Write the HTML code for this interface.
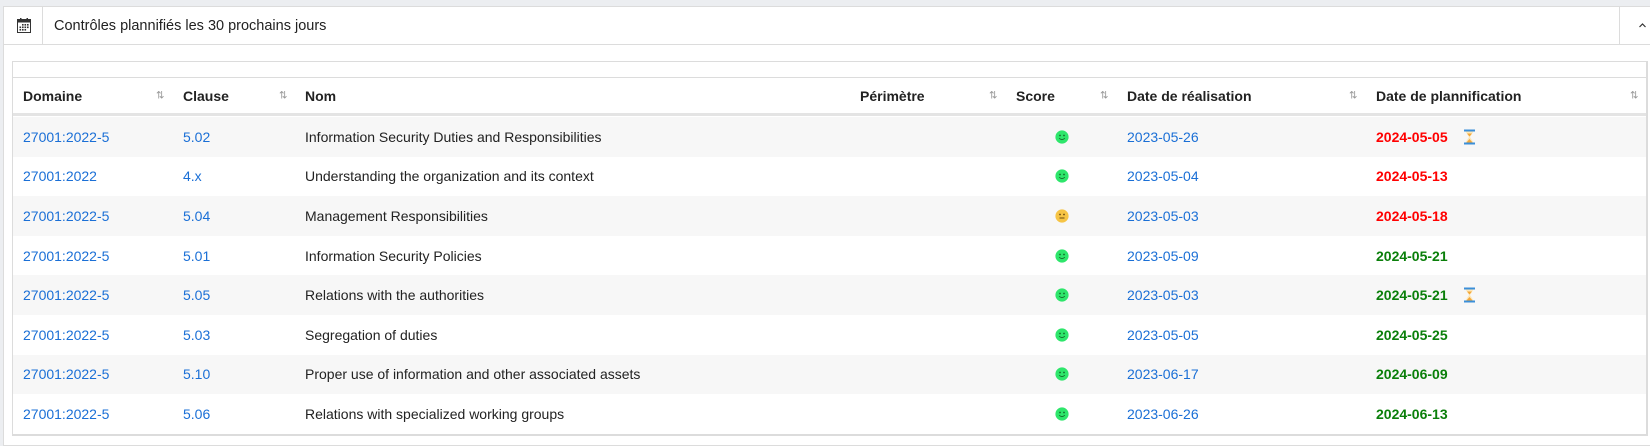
<!DOCTYPE html>
<html><head><meta charset="utf-8"><style>
*{box-sizing:border-box;margin:0;padding:0}
body{width:1650px;height:443px;background:#eceef1;font-family:"Liberation Sans",sans-serif;font-size:14px;color:#222;position:relative;overflow:hidden}
.card{position:absolute;left:3px;top:6px;width:1650px;height:440px;background:#fff;border:1px solid #dcdcdc}
.hdr{position:absolute;left:0;top:0;right:0;height:38px;border-bottom:1px solid #dcdcdc}
.ico{position:absolute;left:0;top:0;width:39px;height:37px;border-right:1px solid #dcdcdc}
.title{position:absolute;left:50px;top:11px;font-size:14.5px;color:#222}
.car{position:absolute;left:1615px;top:0;width:40px;height:37px;border-left:1px solid #dcdcdc}
.tbl{position:absolute;left:12px;top:61px;width:1636px;height:375px;border:1px solid #dcdcdc;border-bottom:2px solid #dcdcdc;border-right:2px solid #dcdcdc}
.th{position:absolute;left:0;top:15px;right:0;height:39px;border-top:1px solid #dcdcdc;border-bottom:3px solid #e4e4e4;font-weight:bold}
.row{position:absolute;left:0;right:0;height:39.6px}
.c{position:absolute;top:50%;transform:translateY(-50%);white-space:nowrap}
.a{color:#1a6fd6}
.s{color:#999;font-size:10px;font-weight:normal}
.r{color:#f00;font-weight:bold}
.g{color:#0a7f0a;font-weight:bold}
</style></head><body>
<svg width="0" height="0" style="position:absolute"><defs>
<symbol id="smg" viewBox="0 0 14 14"><circle cx="7" cy="7" r="6.6" fill="#2ee66b"/><circle cx="5" cy="5.5" r="0.9" fill="#146b2a"/><circle cx="9" cy="5.5" r="0.9" fill="#146b2a"/><path d="M4.2 8.2 Q7 11 9.8 8.2" fill="none" stroke="#146b2a" stroke-width="1"/></symbol>
<symbol id="smy" viewBox="0 0 14 14"><circle cx="7" cy="7" r="6.6" fill="#f6c445"/><circle cx="5" cy="5.5" r="0.9" fill="#6b4a10"/><circle cx="9" cy="5.5" r="0.9" fill="#6b4a10"/><path d="M4.5 9 H9.5" stroke="#6b4a10" stroke-width="1"/></symbol>
<symbol id="hg" viewBox="0 0 11 15"><rect x="0" y="0" width="11" height="2" fill="#3b8fd9"/><rect x="0" y="13" width="11" height="2" fill="#3b8fd9"/><path d="M1.5 2 H9.5 L6 7.5 L9.5 13 H1.5 L5 7.5 Z" fill="#fde7b8"/><path d="M3 4 H8 L5.5 7 Z M2.5 13 L5.5 9.5 L8.5 13 Z" fill="#f3a73a"/></symbol>
</defs></svg>
<div class="card">
<div class="hdr">
<div class="ico"><svg style="position:absolute;left:13px;top:11px" width="14" height="15" viewBox="0 0 14 15"><rect x="0.5" y="1.5" width="13" height="13" fill="#fff" stroke="#333"/><rect x="0" y="1" width="14" height="3.5" fill="#333"/><rect x="3" y="0" width="1.5" height="2" fill="#333"/><rect x="9.5" y="0" width="1.5" height="2" fill="#333"/><g fill="#333"><rect x="5" y="6" width="1.6" height="1.6"/><rect x="7.5" y="6" width="1.6" height="1.6"/><rect x="10" y="6" width="1.6" height="1.6"/><rect x="2.5" y="8.5" width="1.6" height="1.6"/><rect x="5" y="8.5" width="1.6" height="1.6"/><rect x="7.5" y="8.5" width="1.6" height="1.6"/><rect x="10" y="8.5" width="1.6" height="1.6"/><rect x="2.5" y="11" width="1.6" height="1.6"/><rect x="5" y="11" width="1.6" height="1.6"/><rect x="7.5" y="11" width="1.6" height="1.6"/></g></svg></div>
<div class="title">Contrôles plannifiés les 30 prochains jours</div>
<div class="car"><svg style="position:absolute;left:19px;top:16px" width="7" height="5" viewBox="0 0 7 5"><path d="M0.5 4 L3.5 1 L6.5 4" fill="none" stroke="#333" stroke-width="1.2"/></svg></div>
</div>
</div>
<div class="tbl">
<div class="th">
<span class="c" style="left:10px">Domaine</span><span class="c s" style="left:143px">⇅</span>
<span class="c" style="left:170px">Clause</span><span class="c s" style="left:266px">⇅</span>
<span class="c" style="left:292px">Nom</span>
<span class="c" style="left:847px">Périmètre</span><span class="c s" style="left:976px">⇅</span>
<span class="c" style="left:1003px">Score</span><span class="c s" style="left:1087px">⇅</span>
<span class="c" style="left:1114px">Date de réalisation</span><span class="c s" style="left:1336px">⇅</span>
<span class="c" style="left:1363px">Date de plannification</span><span class="c s" style="left:1617px">⇅</span>
</div>
<div style="position:absolute;left:0;right:0;top:55px">
<div class="row" style="top:0;background:#f7f7f7"><span class="c a" style="left:10px">27001:2022-5</span><span class="c a" style="left:170px">5.02</span><span class="c" style="left:292px">Information Security Duties and Responsibilities</span><svg class="c" style="left:1042px" width="14" height="14"><use href="#smg"/></svg><span class="c a" style="left:1114px">2023-05-26</span><span class="c r" style="left:1363px">2024-05-05</span><svg class="c" style="left:1451px" width="11" height="15"><use href="#hg"/></svg></div>
<div class="row" style="top:39.6px;background:#fff"><span class="c a" style="left:10px">27001:2022</span><span class="c a" style="left:170px">4.x</span><span class="c" style="left:292px">Understanding the organization and its context</span><svg class="c" style="left:1042px" width="14" height="14"><use href="#smg"/></svg><span class="c a" style="left:1114px">2023-05-04</span><span class="c r" style="left:1363px">2024-05-13</span></div>
<div class="row" style="top:79.2px;background:#f7f7f7"><span class="c a" style="left:10px">27001:2022-5</span><span class="c a" style="left:170px">5.04</span><span class="c" style="left:292px">Management Responsibilities</span><svg class="c" style="left:1042px" width="14" height="14"><use href="#smy"/></svg><span class="c a" style="left:1114px">2023-05-03</span><span class="c r" style="left:1363px">2024-05-18</span></div>
<div class="row" style="top:118.8px;background:#fff"><span class="c a" style="left:10px">27001:2022-5</span><span class="c a" style="left:170px">5.01</span><span class="c" style="left:292px">Information Security Policies</span><svg class="c" style="left:1042px" width="14" height="14"><use href="#smg"/></svg><span class="c a" style="left:1114px">2023-05-09</span><span class="c g" style="left:1363px">2024-05-21</span></div>
<div class="row" style="top:158.4px;background:#f7f7f7"><span class="c a" style="left:10px">27001:2022-5</span><span class="c a" style="left:170px">5.05</span><span class="c" style="left:292px">Relations with the authorities</span><svg class="c" style="left:1042px" width="14" height="14"><use href="#smg"/></svg><span class="c a" style="left:1114px">2023-05-03</span><span class="c g" style="left:1363px">2024-05-21</span><svg class="c" style="left:1451px" width="11" height="15"><use href="#hg"/></svg></div>
<div class="row" style="top:198px;background:#fff"><span class="c a" style="left:10px">27001:2022-5</span><span class="c a" style="left:170px">5.03</span><span class="c" style="left:292px">Segregation of duties</span><svg class="c" style="left:1042px" width="14" height="14"><use href="#smg"/></svg><span class="c a" style="left:1114px">2023-05-05</span><span class="c g" style="left:1363px">2024-05-25</span></div>
<div class="row" style="top:237.6px;background:#f7f7f7"><span class="c a" style="left:10px">27001:2022-5</span><span class="c a" style="left:170px">5.10</span><span class="c" style="left:292px">Proper use of information and other associated assets</span><svg class="c" style="left:1042px" width="14" height="14"><use href="#smg"/></svg><span class="c a" style="left:1114px">2023-06-17</span><span class="c g" style="left:1363px">2024-06-09</span></div>
<div class="row" style="top:277.2px;background:#fff"><span class="c a" style="left:10px">27001:2022-5</span><span class="c a" style="left:170px">5.06</span><span class="c" style="left:292px">Relations with specialized working groups</span><svg class="c" style="left:1042px" width="14" height="14"><use href="#smg"/></svg><span class="c a" style="left:1114px">2023-06-26</span><span class="c g" style="left:1363px">2024-06-13</span></div>
</div>
</div>
</body></html>
